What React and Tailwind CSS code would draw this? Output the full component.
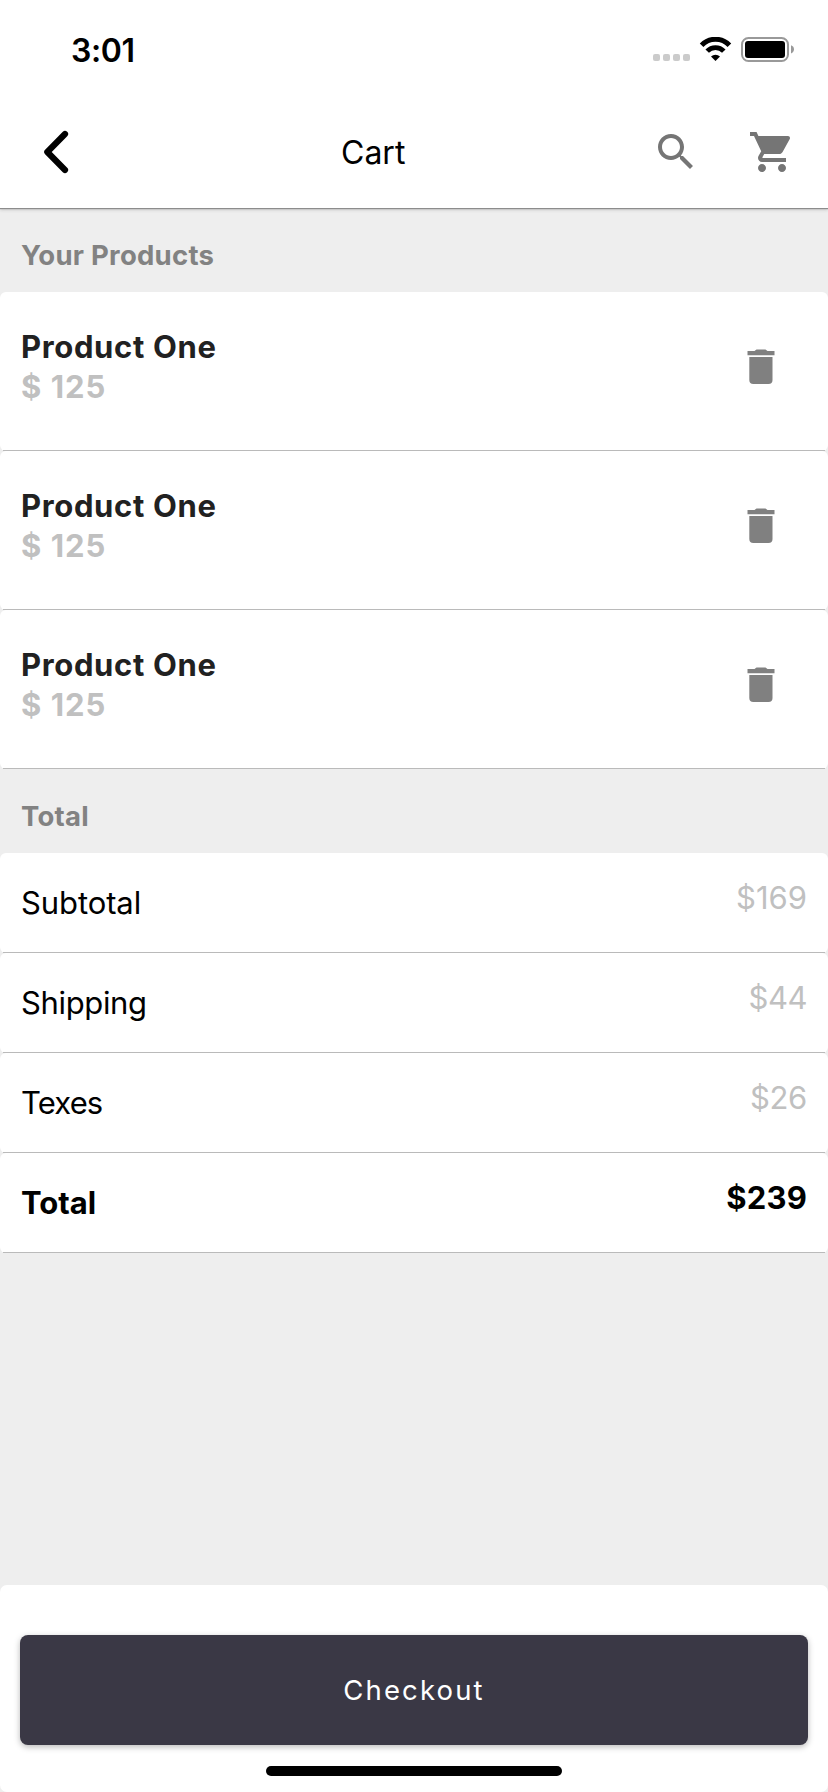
const products = [
  { id: 1, name: "Product One", price: "$ 125" },
  { id: 2, name: "Product One", price: "$ 125" },
  { id: 3, name: "Product One", price: "$ 125" },
];

const totals = [
  { label: "Subtotal", value: "$169", labelClass: "tracking-[-0.1px]", valueClass: "" },
  { label: "Shipping", value: "$44", labelClass: "tracking-[-0.35px]", valueClass: "tracking-[-0.5px]" },
  { label: "Texes", value: "$26", labelClass: "tracking-[-0.85px]", valueClass: "tracking-[-0.3px]" },
  { label: "Total", value: "$239", labelClass: "", valueClass: "tracking-[0.2px]", strong: true },
];

function StatusBar() {
  return (
    <div className="flex h-24 items-start justify-between pl-[71px] pr-[33px]">
      <span className="pt-[31px] text-[32px] leading-[40px] font-semibold tracking-[-0.4px] text-black">3:01</span>
      <div className="flex items-start pt-[37px]">
        <div className="mt-[17px] flex gap-[3px]">
          <span className="size-[7px] rounded-[2px] bg-[#cbcbcb]" />
          <span className="size-[7px] rounded-[2px] bg-[#cbcbcb]" />
          <span className="size-[7px] rounded-[2px] bg-[#cbcbcb]" />
          <span className="size-[7px] rounded-[2px] bg-[#cbcbcb]" />
        </div>
        <svg className="ml-[9px] h-[25px] w-[33px]" viewBox="0 0 33 25">
          <path d="M2.6 8.2A19.2 19.2 0 0 1 30.4 8.2" fill="none" stroke="#000" strokeWidth="5" />
          <path d="M8.2 14.2A11.4 11.4 0 0 1 24.8 14.2" fill="none" stroke="#000" strokeWidth="4.8" />
          <path d="M16.5 24L12 19.6A6.4 6.4 0 0 1 21 19.6Z" fill="#000" />
        </svg>
        <svg className="ml-[9px] h-[25px] w-[54px]" viewBox="0 0 54 25">
          <rect x="1" y="1" width="46" height="23" rx="6.5" fill="none" stroke="#999" strokeWidth="2" />
          <rect x="4" y="4" width="40" height="17" rx="3" fill="#000" />
          <path d="M50 8.3C52 9 53 10.5 53 12.3S52 15.7 50 16.4Z" fill="#999" />
        </svg>
      </div>
    </div>
  );
}

function NavBar() {
  return (
    <div className="flex h-28 items-start pt-8 pr-8 pl-10">
      <svg className="h-12 w-8 shrink-0" viewBox="0 0 32 48">
        <path d="M25 6L7.3 24L25 42" fill="none" stroke="#000" strokeWidth="6.2" strokeLinecap="round" strokeLinejoin="round" />
      </svg>
      <h1 className="w-[580px] pt-px pl-[269px] text-[32px] leading-[48px] text-black">Cart</h1>
      <svg className="size-12 shrink-0" viewBox="0 0 24 24" fill="#757575">
        <path d="M15.5 14h-.79l-.28-.27C15.41 12.59 16 11.11 16 9.5 16 5.91 13.09 3 9.5 3S3 5.91 3 9.5 5.91 16 9.5 16c1.61 0 3.09-.59 4.23-1.57l.27.28v.79l5 4.99L20.49 19l-4.99-5zm-6 0C7.01 14 5 11.99 5 9.5S7.01 5 9.5 5 14 7.01 14 9.5 11.99 14 9.5 14z" />
      </svg>
      <svg className="ml-12 size-12 shrink-0" viewBox="0 0 24 24" fill="#757575">
        <path d="M7 18c-1.1 0-1.99.9-1.99 2S5.9 22 7 22s2-.9 2-2-.9-2-2-2zM1 2v2h2l3.6 7.59-1.35 2.45c-.16.28-.25.61-.25.96 0 1.1.9 2 2 2h12v-2H7.42c-.14 0-.25-.11-.25-.25l.03-.12.9-1.63h7.45c.75 0 1.41-.41 1.75-1.03l3.58-6.49c.08-.14.12-.31.12-.48 0-.55-.45-1-1-1H5.21l-.94-2H1zm16 16c-1.1 0-1.99.9-1.99 2s.89 2 1.99 2 2-.9 2-2-.9-2-2-2z" />
      </svg>
    </div>
  );
}

function SectionTitle({ children }) {
  return (
    <h2 className="h-[84px] pt-[27px] pl-[21px] text-[27.5px] leading-[40px] font-bold tracking-[0.25px] text-[#828282]">
      {children}
    </h2>
  );
}

function Card({ children }) {
  return (
    <li className="flex flex-col rounded-[6px] bg-white">
      {children}
      <div className="mx-[3px] h-px bg-[#bababa]" />
    </li>
  );
}

function ProductRow({ name, price }) {
  return (
    <Card>
      <div className="flex h-[158px] justify-between pr-[53px] pl-[21px]">
        <div className="pt-[35px] text-[31px] leading-[40px] font-bold">
          <div className="tracking-[0.65px] text-[#212121]">{name}</div>
          <div className="tracking-[1px] text-[#c0c0c0]">{price}</div>
        </div>
        <svg className="mt-[57px] h-[36px] w-[28px]" viewBox="0 0 28 36" fill="#808080">
          <path d="M.5 2H7.5L9.5 .4H18.5L20.5 2H27.5V6.2H.5Z" />
          <path d="M2.3 8H25.5V31A4 4 0 0 1 21.5 35H6.3A4 4 0 0 1 2.3 31Z" />
        </svg>
      </div>
    </Card>
  );
}

function TotalRow({ label, value, labelClass, valueClass, strong }) {
  return (
    <Card>
      <div className={`flex h-[99px] justify-between pr-[21px] pl-[21px] text-[31px] leading-[40px] ${strong ? "font-bold" : ""}`}>
        <span className={`pt-[30px] text-black ${labelClass}`}>{label}</span>
        <span className={`pt-[25px] ${strong ? "text-black" : "text-[#c0c0c0]"} ${valueClass}`}>{value}</span>
      </div>
    </Card>
  );
}

export default function App() {
  return (
    <div className="flex h-[1792px] w-[828px] flex-col bg-[#eeeeee] font-['Inter','Liberation_Sans',sans-serif]">
      <header className="z-10 h-[208px] shrink-0 bg-white shadow-[0_1px_1px_#8c8c8c,0_2px_3px_#c8c8c8]">
        <StatusBar />
        <NavBar />
      </header>
      <main className="flex-1">
        <SectionTitle>Your Products</SectionTitle>
        <ul>
          {products.map((p) => (
            <ProductRow key={p.id} name={p.name} price={p.price} />
          ))}
        </ul>
        <SectionTitle>Total</SectionTitle>
        <ul>
          {totals.map((t) => (
            <TotalRow key={t.label} {...t} />
          ))}
        </ul>
      </main>
      <footer className="flex h-[207px] shrink-0 flex-col items-center rounded-[7px] bg-white px-5 pt-[50px]">
        <button className="h-[110px] w-full rounded-[8px] bg-[#3a3845] pt-[2px] text-[27.5px] tracking-[2.15px] text-white shadow-[0_2px_6px_rgba(0,0,0,0.28)]">
          Checkout
        </button>
        <div className="mt-[21px] h-[10px] w-[296px] rounded-full bg-black" />
      </footer>
    </div>
  );
}
